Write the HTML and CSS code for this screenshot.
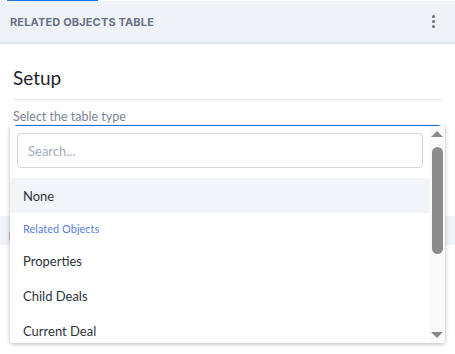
FILE: index.html
```html
<!DOCTYPE html>
<html>
<head>
<meta charset="utf-8">
<link rel="stylesheet" href="styles.css">
</head>
<body>
<div class="tabbar"><span class="tab-active"></span></div>
<header class="panel-head">
  <span class="panel-title">RELATED OBJECTS TABLE</span>
  <span class="kebab"><i></i><i></i><i></i></span>
</header>
<main class="content">
  <h2 class="section-title">Setup</h2>
  <div class="divider"></div>
  <label class="field-label">Select the table type</label>
  <div class="select-box"></div>
</main>
<div class="band"><span class="band-mark"></span></div>

<div class="dropdown">
  <div class="dd-list">
    <div class="dd-search"><input class="search-input" type="text" placeholder="Search..."></div>
    <div class="dd-option selected">None</div>
    <div class="dd-group">Related Objects</div>
    <div class="dd-option">Properties</div>
    <div class="dd-option">Child Deals</div>
    <div class="dd-option">Current Deal</div>
  </div>
  <div class="scrollbar">
    <span class="arrow up"></span>
    <span class="thumb"></span>
    <span class="arrow down"></span>
  </div>
</div>
</body>
</html>
```
FILE: styles.css
```css
* { box-sizing: border-box; }
html, body { margin: 0; padding: 0; }
body {
  width: 455px;
  height: 354px;
  overflow: hidden;
  background: #ffffff;
  font-family: Lato, "Noto Sans", "Liberation Sans", sans-serif;
  color: #2d3440;
  position: relative;
}
.tabbar { height: 1px; }
.tab-active {
  display: block;
  margin-left: 7px;
  width: 91px;
  height: 1px;
  background: #1a73e8;
}
.panel-head {
  height: 43px;
  background: #eff3f8;
  border-bottom: 2px solid #e0e5ec;
  display: flex;
  align-items: center;
  justify-content: space-between;
  padding: 0 20px 0 10px;
}
.panel-title {
  font-family: Inter, "Liberation Sans", sans-serif;
  font-size: 11px;
  font-weight: 700;
  letter-spacing: 0.15px;
  color: #677183;
  margin-top: 1px;
}
.kebab {
  display: flex;
  flex-direction: column;
  gap: 2px;
}
.kebab i {
  display: block;
  width: 3px;
  height: 3px;
  border-radius: 50%;
  background: #677183;
}
.content { padding: 0 13px; }
.section-title {
  margin: 22px 0 0;
  font-size: 19px;
  font-weight: 400;
  line-height: 24px;
  color: #1f2530;
}
.divider {
  margin-top: 9px;
  height: 1px;
  background: #e3e7ee;
}
.field-label {
  display: block;
  margin-top: 9px;
  font-size: 12.5px;
  line-height: 15px;
  color: #7b8496;
}
.select-box {
  margin-top: 1px;
  height: 36px;
  border: 1px solid #1a73e8;
  border-radius: 4px;
}
.band {
  margin-top: 55px;
  height: 29px;
  background: #eff3f8;
  position: relative;
}
.band-mark {
  position: absolute;
  left: 9px;
  top: 16px;
  width: 2px;
  height: 8px;
  background: #c9b8ae;
}
.dropdown {
  position: absolute;
  left: 10px;
  top: 126px;
  width: 435px;
  height: 217px;
  background: #ffffff;
  border-radius: 0 0 3px 3px;
  box-shadow: 0 1px 4px rgba(0, 0, 0, 0.28);
  display: flex;
  overflow: hidden;
}
.dd-list { flex: 1; min-width: 0; }
.dd-search { padding: 7px 6px 10px 7px; }
.search-input {
  display: block;
  width: 406px;
  height: 35px;
  border: 1px solid #cfd6e0;
  border-radius: 4px;
  padding: 0 10px;
  font-family: inherit;
  font-size: 13px;
  color: #2d3440;
  outline: none;
}
.search-input::placeholder { color: #a3acbb; }
.dd-option {
  height: 35px;
  display: flex;
  align-items: center;
  padding-left: 13px;
  font-size: 13px;
  color: #2d3440;
}
.dd-option.selected { background: #f3f4f7; }
.dd-group {
  height: 30px;
  display: flex;
  align-items: center;
  padding-left: 13px;
  font-size: 11px;
  color: #5b80e0;
}
.scrollbar {
  width: 16px;
  background: #fafafa;
  display: flex;
  flex-direction: column;
  align-items: center;
  padding: 5px 0 5px;
}
.arrow {
  width: 0;
  height: 0;
  border-left: 6px solid transparent;
  border-right: 6px solid transparent;
}
.arrow.up { border-bottom: 6px solid #8a8a8a; }
.arrow.down { border-top: 6px solid #8a8a8a; margin-top: auto; }
.thumb {
  margin-top: 10px;
  width: 11px;
  height: 107px;
  border-radius: 6px;
  background: #8c8c8c;
}
```
